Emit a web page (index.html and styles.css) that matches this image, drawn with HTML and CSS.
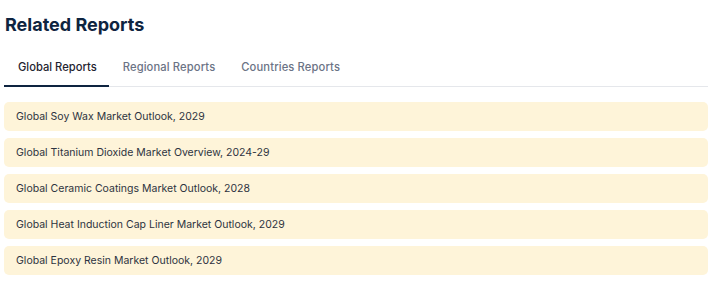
FILE: index.html
```html
<!DOCTYPE html>
<html lang="en">
<head>
    <meta charset="UTF-8">
    <title>Related Reports</title>
    <link rel="stylesheet" href="styles.css">
</head>
<body>
    <div class="related">
        <h2>Related Reports</h2>
        <div class="tabs">
            <button class="tab active">Global Reports</button>
            <button class="tab">Regional Reports</button>
            <button class="tab">Countries Reports</button>
        </div>
        <ul class="report-list">
            <li><a href="#">Global Soy Wax Market Outlook, 2029</a></li>
            <li><a href="#">Global Titanium Dioxide Market Overview, 2024-29</a></li>
            <li><a href="#">Global Ceramic Coatings Market Outlook, 2028</a></li>
            <li><a href="#">Global Heat Induction Cap Liner Market Outlook, 2029</a></li>
            <li><a href="#">Global Epoxy Resin Market Outlook, 2029</a></li>
        </ul>
    </div>
</body>
</html>
```

FILE: styles.css
```css
body {
    margin: 0;
    padding: 0 10px 0 4px;
    font-family: Inter, "Noto Sans", sans-serif;
    background: #fff;
}
.related h2 {
    margin: 0;
    padding: 12px 0 0 1px;
    font-size: 18px;
    line-height: 26px;
    font-weight: 700;
    color: #0e2440;
}
.tabs {
    display: flex;
    margin-top: 22px;
    border-bottom: 1px solid #e5e7eb;
}
.tab {
    background: none;
    border: none;
    padding: 0 12px 11px 14px;
    font-family: inherit;
    font-size: 11.2px;
    line-height: 14px;
    font-weight: 500;
    letter-spacing: 0.12px;
    color: #6b7385;
    cursor: pointer;
    margin-bottom: -1px;
    border-bottom: 2px solid transparent;
}
.tab.active {
    color: #1f2430;
    letter-spacing: 0;
    border-bottom-color: #0e2440;
}
.report-list {
    list-style: none;
    margin: 15px 0 0;
    padding: 0;
}
.report-list li {
    margin-bottom: 7px;
}
.report-list a {
    display: block;
    padding: 0 12px;
    height: 29px;
    line-height: 29px;
    background: #fef4d9;
    border-radius: 5px;
    font-size: 10.5px;
    color: #2d3340;
    text-decoration: none;
}
```
